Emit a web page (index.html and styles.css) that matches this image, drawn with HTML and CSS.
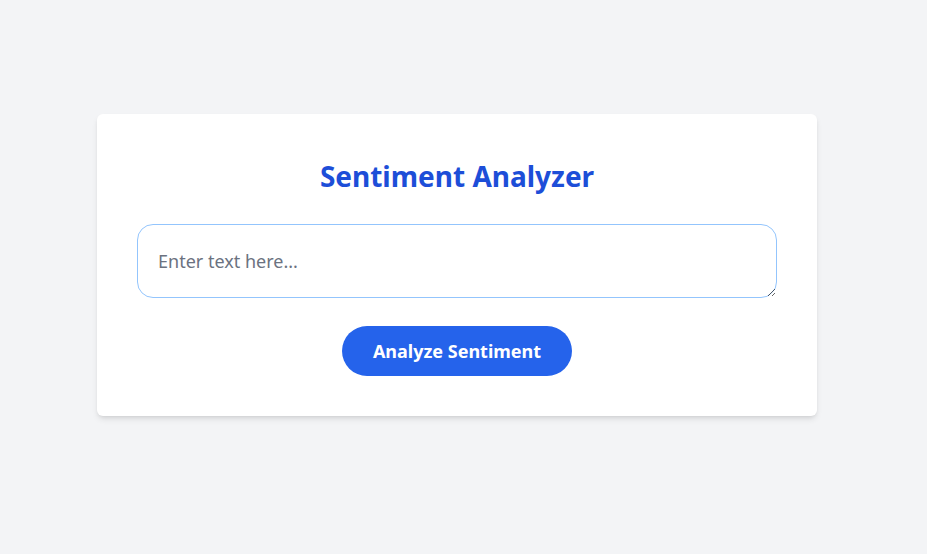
FILE: index.html
```html
<!DOCTYPE html>
<html lang="en">
<head>
<meta charset="utf-8">
<title>Sentiment Analyzer</title>
<link rel="stylesheet" href="styles.css">
</head>
<body>
<main class="page">
  <section class="card">
    <h1 class="title">Sentiment Analyzer</h1>
    <textarea class="input" placeholder="Enter text here..."></textarea>
    <div class="actions">
      <button class="btn" type="button">Analyze Sentiment</button>
    </div>
  </section>
</main>
</body>
</html>
```
FILE: styles.css
```css
* { box-sizing: border-box; }
html, body { margin: 0; padding: 0; }
body {
  background: #f3f4f6;
  font-family: "Noto Sans", "Open Sans", sans-serif;
  min-height: 554px;
}
.page {
  padding: 114px 0 0 97px;
}
.card {
  width: 720px;
  background: #ffffff;
  border-radius: 6px;
  box-shadow: 0 4px 6px -1px rgba(0,0,0,0.1), 0 2px 4px -2px rgba(0,0,0,0.1);
  padding: 40px;
  display: flex;
  flex-direction: column;
}
.title {
  margin: 0 0 30px;
  padding-top: 4px;
  text-align: center;
  color: #1d4ed8;
  font-size: 28px;
  line-height: 36px;
  font-weight: 700;
}
.input {
  display: block;
  width: 640px;
  height: 74px;
  border: 1px solid #93c5fd;
  border-radius: 16px;
  padding: 23px 20px 21px;
  font-family: inherit;
  font-size: 18px;
  line-height: 26px;
  color: #111827;
  outline: none;
  resize: vertical;
}
.input::placeholder { color: #6b7280; }
.actions {
  display: flex;
  justify-content: center;
  margin-top: 28px;
}
.btn {
  width: 230px;
  height: 50px;
  border: none;
  border-radius: 9999px;
  background: #2563eb;
  color: #ffffff;
  font-family: inherit;
  font-size: 18px;
  font-weight: 700;
  cursor: pointer;
}
```
